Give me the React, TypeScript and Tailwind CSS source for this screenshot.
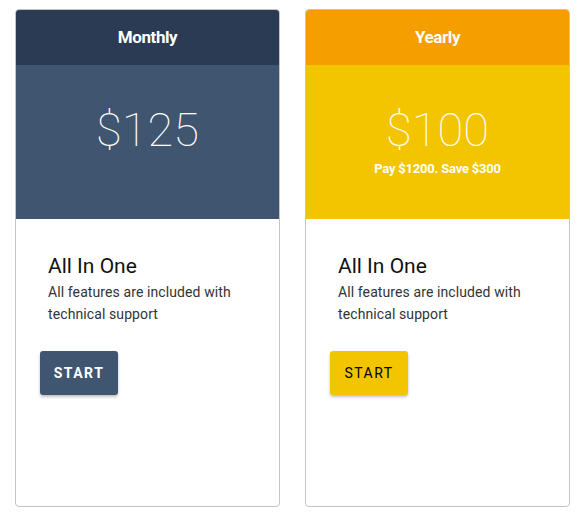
const plans = [
  {
    name: "Monthly",
    price: "$125",
    note: "",
    head: "bg-[#2a3b53]",
    body: "bg-[#405670]",
    button: "bg-[#405670] text-white font-bold",
  },
  {
    name: "Yearly",
    price: "$100",
    note: "Pay $1200. Save $300",
    head: "bg-[#f59e00]",
    body: "bg-[#f2c500]",
    button: "bg-[#f2c500] text-black font-normal",
  },
];

function PlanCard({ plan }: { plan: (typeof plans)[number] }) {
  return (
    <div className="flex h-[498px] w-[265px] flex-col overflow-hidden rounded-[4px] border border-[#c4c4c4] bg-white">
      <div
        className={`${plan.head} flex h-[55px] items-center justify-center text-[17px] font-bold tracking-[-0.4px] text-white`}
      >
        {plan.name}
      </div>
      <div className={`${plan.body} flex h-[154px] flex-col items-center pt-[37px] text-white`}>
        <div className="text-[47px] font-thin leading-[56px]">{plan.price}</div>
        {plan.note && (
          <div className="mt-[1px] text-[13px] font-bold tracking-[-0.2px]">{plan.note}</div>
        )}
      </div>
      <div className="flex flex-col px-[24px] pt-[34px]">
        <div className="pl-[8px] text-[21px] leading-[26px] text-[#111]">All In One</div>
        <p className="mt-[2px] pl-[8px] text-[14px] leading-[22px] tracking-[0.1px] text-[#333]">
          All features are included with technical support
        </p>
        <button
          className={`${plan.button} mt-[26px] h-[44px] w-[78px] rounded-[3px] text-[14px] tracking-[1.5px] shadow-[0_2px_3px_rgba(0,0,0,0.25)]`}
        >
          START
        </button>
      </div>
    </div>
  );
}

export default function App() {
  return (
    <div className="flex h-[521px] w-[583px] gap-[25px] bg-white pl-[15px] pt-[9px] font-['Roboto',sans-serif]">
      {plans.map((p) => (
        <PlanCard key={p.name} plan={p} />
      ))}
    </div>
  );
}
